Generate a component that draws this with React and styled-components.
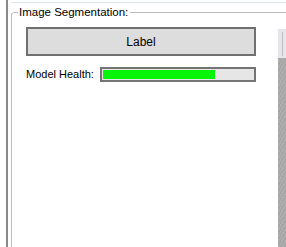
import styled, { createGlobalStyle } from "styled-components";

const GlobalStyle = createGlobalStyle`
  html, body {
    margin: 0;
    padding: 0;
    background: #ffffff;
  }
  body {
    font-family: "Liberation Sans", Arial, sans-serif;
    font-size: 11px;
    color: #000;
  }
`;

const Window = styled.div`
  width: 286px;
  height: 247px;
  overflow: hidden;
  display: flex;
  background: #ffffff;
`;

const Frame = styled.div`
  flex: 1;
  display: flex;
  margin-left: 6px;
  padding-left: 3px;
  border-left: 2px solid #8a8a8a;
`;

const Panel = styled.div`
  flex: 1;
  margin-top: 2px;
  border-top: 1px solid #dce3e9;
`;

const Group = styled.fieldset`
  margin: 2px 0 0 0;
  padding: 0;
  width: 290px;
  height: 260px;
  box-sizing: border-box;
  border: 1px solid #bcbcbc;
  border-radius: 3px;
`;

const Legend = styled.legend`
  margin-left: 6px;
  padding: 0 2px 0 1px;
  font-size: 11.5px;
  line-height: 15px;
  color: #000;
`;

const Body = styled.div`
  display: flex;
  align-items: flex-start;
  padding: 7px 0 0 14px;
`;

const Column = styled.div`
  width: 230px;
  display: flex;
  flex-direction: column;
`;

const Button = styled.button`
  height: 29px;
  width: 100%;
  border: 2px solid #707070;
  background: #dddddd;
  font-family: inherit;
  font-size: 12px;
  color: #000;
  padding: 0;
`;

const HealthRow = styled.div`
  display: flex;
  align-items: center;
  gap: 6px;
  margin-top: 11px;
`;

const Caption = styled.span`
  white-space: nowrap;
  line-height: 15px;
  font-size: 11px;
`;

const Bar = styled.div`
  flex: 1;
  height: 15px;
  box-sizing: border-box;
  border: 2px solid #747474;
  padding: 1px;
  background: #e6e6e6;
`;

const Fill = styled.div`
  height: 100%;
  background: #06f406;
`;

const Strip = styled.div`
  margin-left: 22px;
  margin-top: 2px;
  width: 14px;
  display: flex;
  flex-direction: column;
`;

const Grip = styled.div`
  height: 29px;
  background: #e6e6ea;
  display: flex;
  padding: 3px 0 2px 4px;
  box-sizing: border-box;
`;

const GripLine = styled.div`
  width: 1px;
  background: #bdbdc2;
`;

const Texture = styled.div`
  height: 200px;
  background-color: #aaaaaa;
  background-image:
    repeating-linear-gradient(30deg, rgba(255,255,255,0.06) 0 1px, transparent 1px 2px),
    repeating-linear-gradient(-60deg, rgba(0,0,0,0.05) 0 1px, transparent 1px 3px);
`;

export default function App() {
  const health = 75;
  return (
    <>
      <GlobalStyle />
      <Window>
        <Frame>
          <Panel>
            <Group>
              <Legend>Image Segmentation:</Legend>
              <Body>
                <Column>
                  <Button>Label</Button>
                  <HealthRow>
                    <Caption>Model Health:</Caption>
                    <Bar>
                      <Fill style={{ width: `${health}%` }} />
                    </Bar>
                  </HealthRow>
                </Column>
                <Strip>
                  <Grip>
                    <GripLine />
                  </Grip>
                  <Texture />
                </Strip>
              </Body>
            </Group>
          </Panel>
        </Frame>
      </Window>
    </>
  );
}
